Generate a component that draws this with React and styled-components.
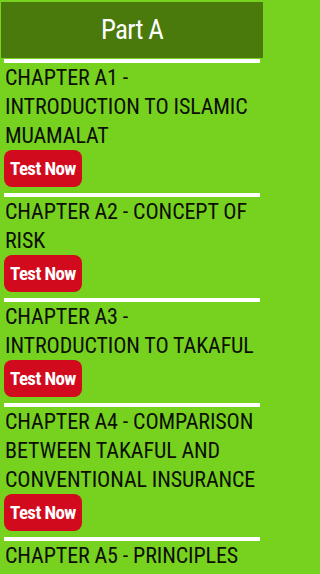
import React from 'react';
import styled, { createGlobalStyle } from 'styled-components';

const GlobalStyle = createGlobalStyle`
  html, body {
    margin: 0;
    padding: 0;
    background: #77d11f;
  }
  body {
    font-family: Roboto, 'Liberation Sans', sans-serif;
  }
`;

const chapters = [
  'CHAPTER A1 - INTRODUCTION TO ISLAMIC MUAMALAT',
  'CHAPTER A2 - CONCEPT OF RISK',
  'CHAPTER A3 - INTRODUCTION TO TAKAFUL',
  'CHAPTER A4 - COMPARISON BETWEEN TAKAFUL AND CONVENTIONAL INSURANCE',
  'CHAPTER A5 - PRINCIPLES OF TAKAFUL',
];

const Screen = styled.div`
  width: 265px;
  height: 574px;
  box-sizing: border-box;
  padding: 2px 2px 0 1px;
  background: #77d11f;
  overflow: hidden;
`;

const Header = styled.header`
  height: 56px;
  display: flex;
  align-items: center;
  justify-content: center;
  background: #4a7a0b;
  margin-bottom: 1px;
`;

const HeaderTitle = styled.h1`
  margin: 0;
  font-family: Roboto, 'Liberation Sans', sans-serif;
  font-stretch: 75%;
  font-weight: 400;
  font-size: 27px;
  letter-spacing: -0.7px;
  color: #ffffff;
`;

const List = styled.div`
  display: flex;
  flex-direction: column;
`;

const Divider = styled.div`
  height: 4px;
  margin: 0 3px;
  background: #ffffff;
`;

const Item = styled.div`
  display: flex;
  flex-direction: column;
  align-items: flex-start;
  padding: 0 0 6px 3px;
`;

const ChapterTitle = styled.div`
  font-family: Roboto, 'Liberation Sans', sans-serif;
  font-stretch: 75%;
  font-size: 22px;
  line-height: 29px;
  letter-spacing: -0.1px;
  color: #0b0f05;
  padding-left: 1px;
`;

const TestButton = styled.button`
  height: 37px;
  width: 78px;
  padding: 0 0 0 6px;
  border: none;
  border-radius: 8px;
  background: #d20a1e;
  color: #ffffff;
  font-family: Roboto, 'Liberation Sans', sans-serif;
  font-stretch: 75%;
  font-weight: 700;
  font-size: 19px;
  letter-spacing: -0.6px;
  text-align: left;
  cursor: pointer;
`;

export default function App() {
  return (
    <>
      <GlobalStyle />
      <Screen>
        <Header>
          <HeaderTitle>Part A</HeaderTitle>
        </Header>
        <List>
          {chapters.map((title) => (
            <React.Fragment key={title}>
              <Divider />
              <Item>
                <ChapterTitle>{title}</ChapterTitle>
                <TestButton>Test Now</TestButton>
              </Item>
            </React.Fragment>
          ))}
        </List>
      </Screen>
    </>
  );
}
